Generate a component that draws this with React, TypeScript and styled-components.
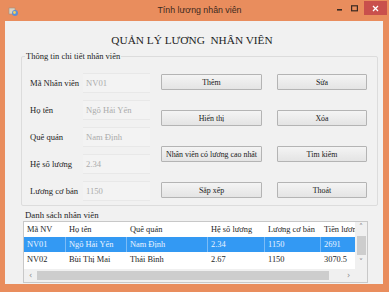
import React from 'react';
import styled, {createGlobalStyle} from 'styled-components';

const GlobalStyle = createGlobalStyle`
  html, body {
    margin: 0;
    padding: 0;
    background: #ffffff;
  }
  * {
    box-sizing: border-box;
  }
`

type Employee = {
    id: string
    name: string
    hometown: string
    coef: string
    base: string
    salary: string
}

const employees: Employee[] = [
    {id: 'NV01', name: 'Ngô Hải Yến', hometown: 'Nam Định', coef: '2.34', base: '1150', salary: '2691'},
    {id: 'NV02', name: 'Bùi Thị Mai', hometown: 'Thái Bình', coef: '2.67', base: '1150', salary: '3070.5'},
]

const columns = [
    {title: 'Mã NV', width: 42},
    {title: 'Họ tên', width: 61},
    {title: 'Quê quán', width: 81},
    {title: 'Hệ số lương', width: 57},
    {title: 'Lương cơ bản', width: 56},
    {title: 'Tiền lương', width: 57},
]

const fields = [
    {label: 'Mã Nhân viên', value: 'NV01'},
    {label: 'Họ tên', value: 'Ngô Hải Yến'},
    {label: 'Quê quán', value: 'Nam Định'},
    {label: 'Hệ số lương', value: '2.34'},
    {label: 'Lương cơ bản', value: '1150'},
]

const actions = ['Thêm', 'Sửa', 'Hiển thị', 'Xóa', 'Nhân viên có lương cao nhất', 'Tìm kiếm', 'Sắp xếp', 'Thoát']

const AppIcon = () => (
    <svg width="11" height="11" viewBox="0 0 11 11">
        <rect x="1" y="2" width="6" height="6" fill="#d9d2c4" stroke="#9c8f80" strokeWidth="0.6"/>
        <circle cx="7" cy="7" r="3" fill="#5a8fd8"/>
        <circle cx="6.5" cy="6.5" r="1.4" fill="#f4d25a"/>
    </svg>
)

export default function App() {
    return (
        <>
            <GlobalStyle/>
            <Window>
                <TitleBar>
                    <TitleIcon><AppIcon/></TitleIcon>
                    <TitleText>Tính lương nhân viên</TitleText>
                    <Controls>
                        <CtrlButton>
                            <svg width="7" height="7" viewBox="0 0 7 7"><rect x="1" y="4" width="5" height="1.6" fill="#3a2a22"/></svg>
                        </CtrlButton>
                        <CtrlButton>
                            <svg width="7" height="7" viewBox="0 0 7 7"><rect x="0.6" y="0.8" width="5.8" height="5" fill="none" stroke="#3a2a22" strokeWidth="1.2"/></svg>
                        </CtrlButton>
                        <CloseButton>
                            <svg width="7" height="7" viewBox="0 0 7 7"><path d="M1 1 L6 6 M6 1 L1 6" stroke="#ffffff" strokeWidth="1.3"/></svg>
                        </CloseButton>
                    </Controls>
                </TitleBar>
                <Client>
                    <Heading>QUẢN LÝ LƯƠNG&nbsp; NHÂN VIÊN</Heading>
                    <DetailGroup>
                        <Legend>Thông tin chi tiết nhân viên</Legend>
                        <DetailBody>
                            <FormGrid>
                                {fields.map(f => (
                                    <React.Fragment key={f.label}>
                                        <FieldLabel>{f.label}</FieldLabel>
                                        <FieldBox>{f.value}</FieldBox>
                                    </React.Fragment>
                                ))}
                            </FormGrid>
                            <ButtonGrid>
                                {actions.map(a => <ActionButton key={a}>{a}</ActionButton>)}
                            </ButtonGrid>
                        </DetailBody>
                    </DetailGroup>
                    <ListGroup>
                        <ListLegend>Danh sách nhân viên</ListLegend>
                        <Grid>
                            <GridMain>
                                <GridRow>
                                    {columns.map(c => <Cell key={c.title} $w={c.width}>{c.title}</Cell>)}
                                </GridRow>
                                {employees.map((e, i) => (
                                    <GridRow key={e.id} $selected={i === 0}>
                                        {[e.id, e.name, e.hometown, e.coef, e.base, e.salary].map((v, j) => (
                                            <Cell key={j} $w={columns[j].width} $selected={i === 0}>{v}</Cell>
                                        ))}
                                    </GridRow>
                                ))}
                                <Filler/>
                                <HScroll>
                                    <Arrow>‹</Arrow>
                                    <HThumb/>
                                    <Arrow>›</Arrow>
                                </HScroll>
                            </GridMain>
                            <VScroll>
                                <Arrow>˄</Arrow>
                                <VThumb/>
                                <Arrow>˅</Arrow>
                                <Corner/>
                            </VScroll>
                        </Grid>
                    </ListGroup>
                </Client>
            </Window>
        </>
    )
}

const Window = styled.div`
  width: 389px;
  height: 292px;
  background: #e98d5d;
  display: flex;
  flex-direction: column;
  padding: 0 6px 8px 5px;
`

const TitleBar = styled.div`
  height: 21px;
  display: flex;
  align-items: flex-start;
`

const TitleIcon = styled.div`
  width: 16px;
  height: 16px;
  display: flex;
  align-items: center;
  justify-content: center;
  margin-top: 3px;
`

const TitleText = styled.div`
  flex: 1;
  text-align: center;
  font-family: "Liberation Sans", Arial, sans-serif;
  font-size: 8.8px;
  color: #3d2a20;
  margin-top: 5px;
  padding-left: 46px;
`

const Controls = styled.div`
  display: flex;
  align-items: flex-start;
  margin-right: -4px;
`

const CtrlButton = styled.div`
  width: 15px;
  height: 15px;
  display: flex;
  align-items: center;
  justify-content: center;
  margin-top: 1px;
`

const CloseButton = styled.div`
  width: 23px;
  height: 14px;
  margin-left: 2px;
  margin-top: 1px;
  background: #c9504c;
  display: flex;
  align-items: center;
  justify-content: center;
`

const Client = styled.div`
  flex: 1;
  background: #f1f1f1;
  display: flex;
  flex-direction: column;
  padding: 0 5px 0 16px;
  font-family: "Liberation Serif", "Times New Roman", serif;
  color: #1e1e1e;
`

const Heading = styled.div`
  text-align: center;
  font-size: 11.3px;
  margin-top: 11px;
  height: 16px;
  line-height: 16px;
  padding-right: 15px;
`

const DetailGroup = styled.fieldset`
  margin: 3px 0 0 0;
  padding: 0;
  border: 1px solid #dcdcdc;
  border-radius: 2px;
  height: 155px;
  min-width: 0;
`

const Legend = styled.legend`
  font-size: 8.5px;
  padding: 0 1px;
  margin-left: 3px;
  line-height: 10px;
`

const DetailBody = styled.div`
  display: flex;
  align-items: flex-start;
`

const FormGrid = styled.div`
  display: grid;
  grid-template-columns: 53px 67px;
  grid-auto-rows: 20px;
  row-gap: 7px;
  margin: 12px 0 0 8px;
`

const FieldLabel = styled.div`
  font-size: 8.6px;
  display: flex;
  align-items: center;
  white-space: nowrap;
`

const FieldBox = styled.div`
  border-top: 1px solid #e8e8e8;
  border-bottom: 1px solid #e8e8e8;
  background: #f3f3f3;
  color: #ababab;
  font-size: 8.6px;
  display: flex;
  align-items: center;
  padding-left: 3px;
  white-space: nowrap;
`

const ButtonGrid = styled.div`
  display: grid;
  grid-template-columns: 101px 90px;
  column-gap: 15px;
  grid-auto-rows: 16px;
  row-gap: 20px;
  margin: 13px 0 0 11px;
`

const ActionButton = styled.button`
  font-family: "Liberation Serif", "Times New Roman", serif;
  font-size: 7.9px;
  color: #202020;
  padding: 0;
  border: 1px solid #b4b4b4;
  border-radius: 1px;
  background: linear-gradient(#f4f4f4, #e4e4e4);
  white-space: nowrap;
  overflow: hidden;
`

const ListGroup = styled.div`
  display: flex;
  flex-direction: column;
  margin-top: 4px;
`

const ListLegend = styled.div`
  font-size: 8.8px;
  line-height: 10px;
  margin-left: 4px;
  height: 11px;
`

const Grid = styled.div`
  width: 345px;
  height: 62px;
  margin-left: 2px;
  border: 1px solid #c8c8c8;
  background: #ffffff;
  display: flex;
  overflow: hidden;
`

const GridMain = styled.div`
  flex: 1;
  display: flex;
  flex-direction: column;
  overflow: hidden;
`

const GridRow = styled.div<{ $selected?: boolean }>`
  height: 15px;
  display: flex;
  flex-shrink: 0;
  background: ${p => p.$selected ? '#3399f3' : '#ffffff'};
`

const Cell = styled.div<{ $w: number, $selected?: boolean }>`
  width: ${p => p.$w}px;
  flex-shrink: 0;
  font-size: 8.4px;
  line-height: 15px;
  padding-left: 3px;
  white-space: nowrap;
  overflow: hidden;
  color: ${p => p.$selected ? '#eaf4ff' : '#1e1e1e'};
  border-right: 1px solid ${p => p.$selected ? '#7cbcf6' : '#ffffff'};
`

const Filler = styled.div`
  flex: 1;
`

const HScroll = styled.div`
  height: 13px;
  flex-shrink: 0;
  display: flex;
  align-items: center;
  background: #f0f0f0;
  padding: 0 1px;
`

const HThumb = styled.div`
  flex: 1;
  height: 9px;
  background: #cdcdcd;
  margin: 0 14px 0 1px;
`

const Arrow = styled.div`
  width: 11px;
  height: 12px;
  font-family: "DejaVu Sans", sans-serif;
  font-size: 8px;
  line-height: 12px;
  color: #8a8a8a;
  text-align: center;
  flex-shrink: 0;
`

const VScroll = styled.div`
  width: 12px;
  display: flex;
  flex-direction: column;
  align-items: center;
  background: #f0f0f0;
`

const VThumb = styled.div`
  width: 9px;
  height: 19px;
  background: #cdcdcd;
  margin: 2px 0;
`

const Corner = styled.div`
  flex: 1;
  width: 12px;
  background: #f0f0f0;
`
